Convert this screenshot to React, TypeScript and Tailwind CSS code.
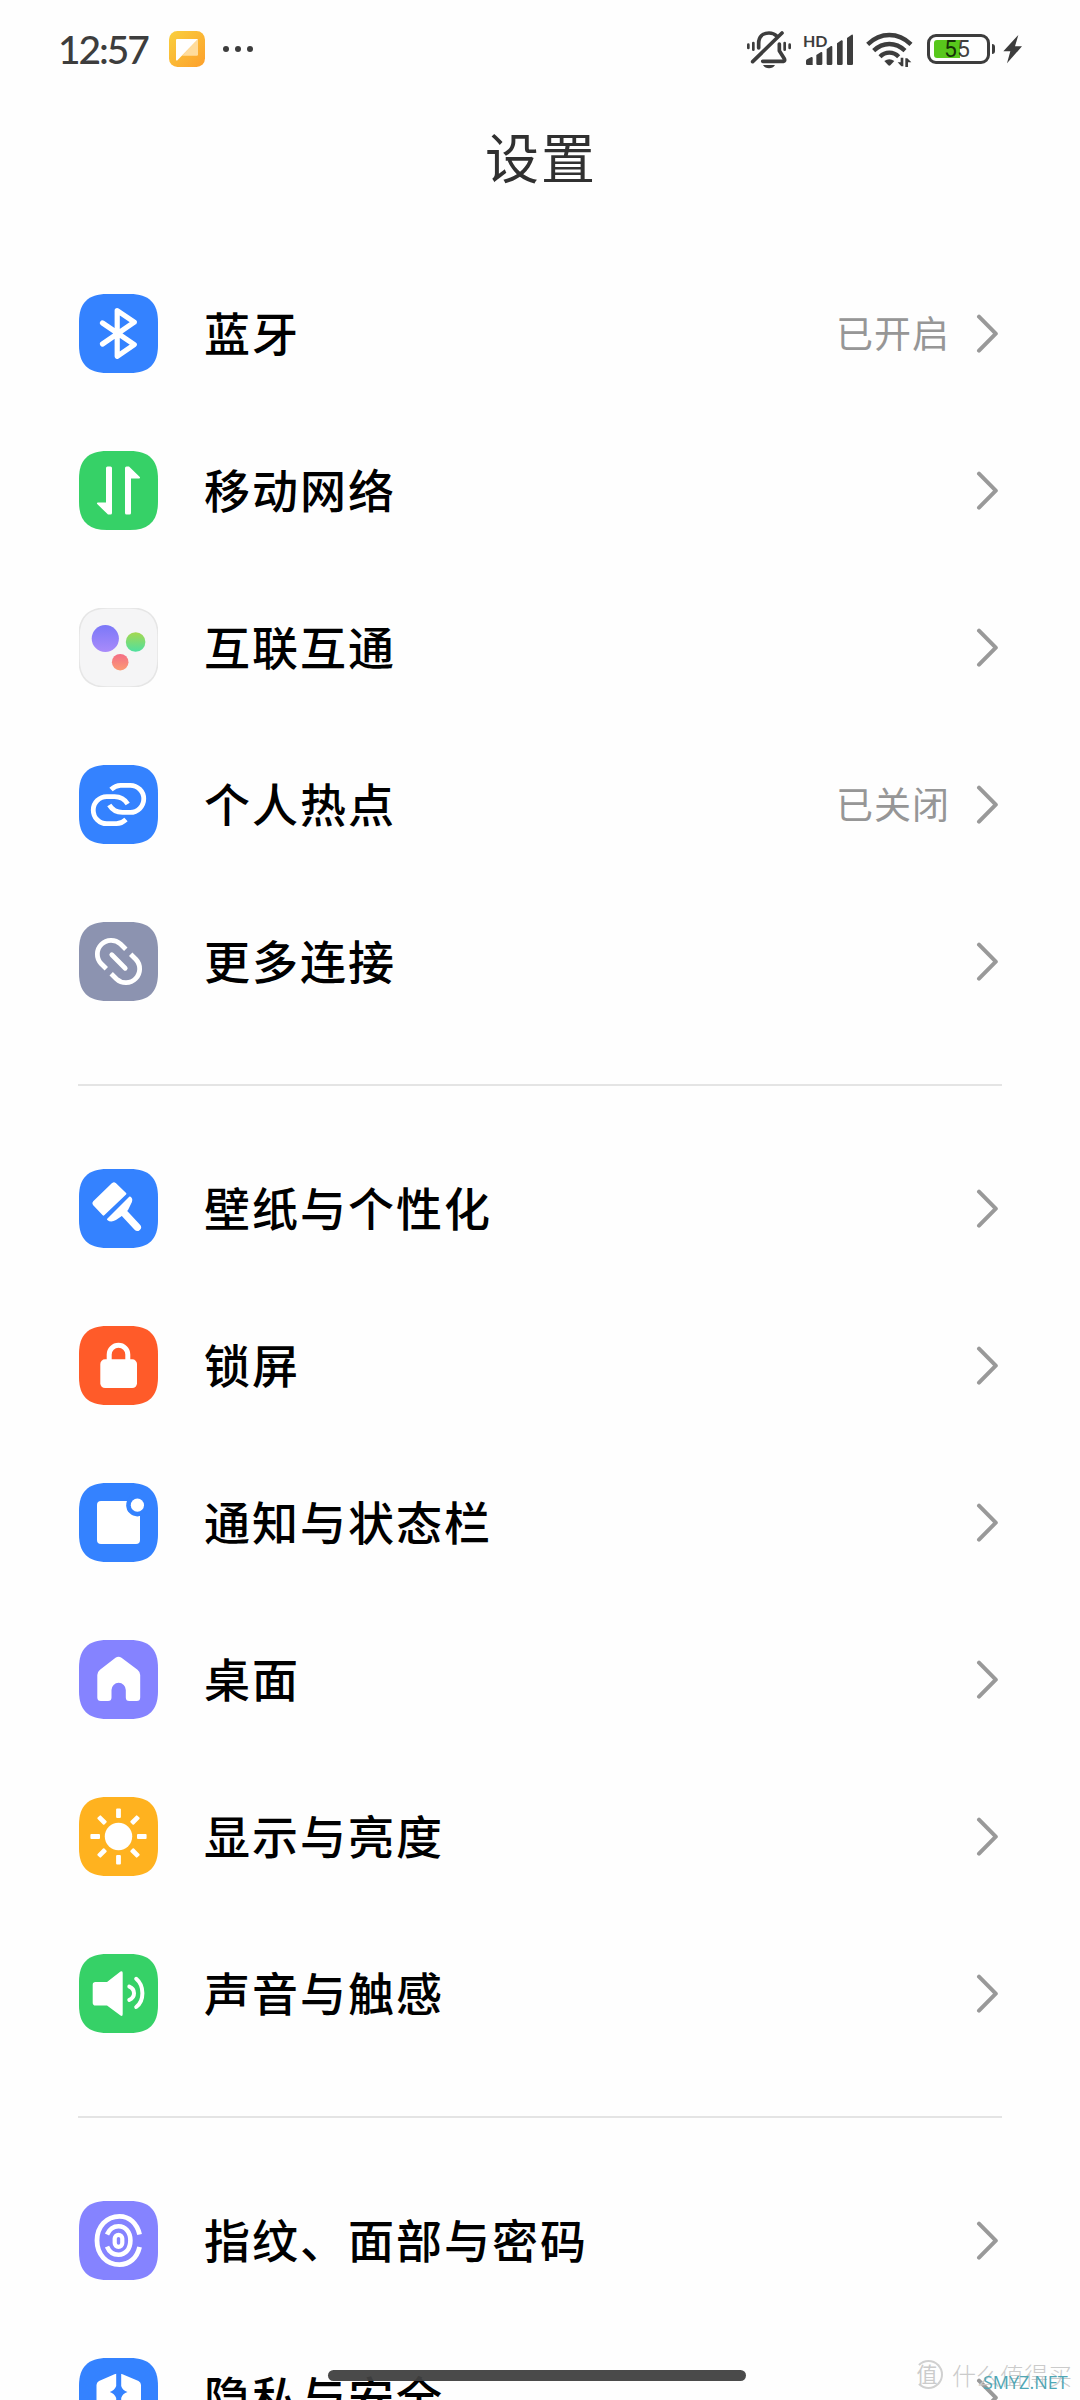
import type { ReactNode } from "react";

const SQUIRCLE =
  "M0 28 C0 9 9 0 28 0 H51 C70 0 79 9 79 28 V51 C79 70 70 79 51 79 H28 C9 79 0 70 0 51 Z";

/** Rounded tile, 79 units wide; glyphs are drawn on top in the same units. */
function Tile({ color, stroke, children }: { color: string; stroke?: string; children: ReactNode }) {
  return (
    <svg className="size-[79px] shrink-0" viewBox="0 0 79 79" fill="none">
      <path d={SQUIRCLE} fill={color} stroke={stroke} strokeWidth={stroke ? 1.5 : 0} />
      {children}
    </svg>
  );
}

const BLUE = "#3482ff";
const GREEN = "#36d167";
const PURPLE = "#8583ff";

const white = { stroke: "#fff", strokeLinecap: "round", strokeLinejoin: "round" } as const;

function BluetoothIcon() {
  return (
    <Tile color={BLUE}>
      <path d="M23.5 29 L55.3 50.6 L38.2 62.3 V16.6 L55.3 28.2 L23.5 50" strokeWidth="5.2" {...white} />
    </Tile>
  );
}

function MobileIcon() {
  const arrow = "M46 17 Q46 15.4 47.5 15.4 H50 L60.8 26 Q61.6 27.5 60 27.5 H52 V62 Q52 63.5 50.5 63.5 H47.5 Q46 63.5 46 62 Z";
  return (
    <Tile color={GREEN}>
      <path d={arrow} fill="#fff" />
      <path d={arrow} fill="#fff" transform="rotate(180 39.5 39.5)" />
    </Tile>
  );
}

function ConnectIcon() {
  return (
    <Tile color="#f5f5f6" stroke="#e6e6e6">
      <defs>
        <linearGradient id="dot-purple" x1="0" y1="0" x2="0" y2="1">
          <stop offset="0" stopColor="#7b78f8" />
          <stop offset="1" stopColor="#a98bfa" />
        </linearGradient>
        <linearGradient id="dot-green" x1="0" y1="0" x2="0" y2="1">
          <stop offset="0" stopColor="#a5d84f" />
          <stop offset="1" stopColor="#4fe0a0" />
        </linearGradient>
        <linearGradient id="dot-red" x1="0" y1="0" x2="0" y2="1">
          <stop offset="0" stopColor="#f46d86" />
          <stop offset="1" stopColor="#fb9c74" />
        </linearGradient>
      </defs>
      <circle cx="26.3" cy="30.5" r="13.6" fill="url(#dot-purple)" />
      <circle cx="56.6" cy="34" r="9.8" fill="url(#dot-green)" />
      <circle cx="41.2" cy="54.2" r="8.3" fill="url(#dot-red)" />
    </Tile>
  );
}

function HotspotIcon() {
  const link = "M32 24.5 Q36.5 20.3 41.5 20.3 H51.2 A13.5 13.5 0 0 1 51.2 47.4 H43.5 C36.5 47.4 33 44.5 30.3 40";
  return (
    <Tile color={BLUE}>
      <path d={link} strokeWidth="4.8" stroke="#fff" />
      <path d={link} strokeWidth="4.8" stroke="#fff" transform="rotate(180 39.5 39.5)" />
    </Tile>
  );
}

function MoreIcon() {
  const half = "M27.3 46.8 L22 41.5 A13.8 13.8 0 0 1 41.5 22 L46.8 27.3";
  return (
    <Tile color="#8c93b0">
      <path d={half} strokeWidth="4.8" stroke="#fff" />
      <path d={half} strokeWidth="4.8" stroke="#fff" transform="rotate(180 39.5 39.5)" />
      <path d="M32.8 32.8 L46.2 46.2" strokeWidth="4.8" {...white} />
    </Tile>
  );
}

function BrushIcon() {
  return (
    <Tile color={BLUE}>
      <path d="M36 14.8 L46.3 24.8 L24.5 45.5 L14.8 35.2 Q14 34 15 33 L33.8 14.8 Q35 14 36 14.8 Z" fill="#fff" strokeWidth="2.2" {...white} />
      <path d="M50.8 28.2 Q53.2 29.5 52.2 32.6 L48.2 40.8 L44.2 45.2 L36.5 50.3 Q32 53 28.8 50.3 Z" fill="#fff" strokeWidth="1.6" {...white} />
      <path d="M46 45 L58.3 58.2" strokeWidth="7.4" {...white} />
    </Tile>
  );
}

function LockIcon() {
  return (
    <Tile color="#ff5b29">
      <rect x="21.3" y="33.3" width="36.7" height="28.8" rx="4.8" fill="#fff" />
      <path d="M30.2 36 V28.6 A9.3 9.3 0 0 1 48.8 28.6 V36" strokeWidth="5" stroke="#fff" />
    </Tile>
  );
}

function NoticeIcon() {
  return (
    <Tile color={BLUE}>
      <rect x="18" y="18" width="43" height="43" rx="4" fill="#fff" />
      <circle cx="58.4" cy="22.2" r="11.2" fill={BLUE} />
      <circle cx="58.4" cy="22.2" r="6.6" fill="#fff" />
    </Tile>
  );
}

function HomeIcon() {
  return (
    <Tile color={PURPLE}>
      <path
        d="M36.5 17.7 Q39.5 15.7 42.5 17.7 L58.5 29.8 Q61.2 32 61.2 35 V57.5 Q61.2 61 57.7 61 H50.3 Q46.8 61 46.8 57.5 V50 A7.1 7.1 0 0 0 32.5 50 V57.5 Q32.5 61 29 61 H21.8 Q18.3 61 18.3 57.5 V35 Q18.3 32 21 29.8 Z"
        fill="#fff"
      />
    </Tile>
  );
}

function SunIcon() {
  return (
    <Tile color="#ffb21f">
      <circle cx="39.5" cy="39.5" r="13.7" fill="#fff" />
      {[0, 45, 90, 135, 180, 225, 270, 315].map((deg) => (
        <rect key={deg} x="37.1" y="11.4" width="4.8" height="9.6" rx="1" fill="#fff" transform={`rotate(${deg} 39.5 39.5)`} />
      ))}
    </Tile>
  );
}

function SoundIcon() {
  return (
    <Tile color={GREEN}>
      <path
        d="M16.5 28 H28 L41.5 17.6 Q43.7 16.2 43.7 19 V60 Q43.7 63 41.5 61.6 L28 51.5 H16.5 Q13.7 51.5 13.7 48.7 V30.8 Q13.7 28 16.5 28 Z"
        fill="#fff"
      />
      <path d="M50.3 32.6 Q55 34.5 55 39.3 Q55 44 50.3 45.9" strokeWidth="4" {...white} />
      <path d="M57.2 24.8 Q63.4 30 63.4 39.3 Q63.4 48.5 57.2 53" strokeWidth="4" {...white} />
    </Tile>
  );
}

function FingerprintIcon() {
  return (
    <Tile color={PURPLE}>
      <path d="M60.6 33.5 C58 22.5 50.5 15.4 40.5 15.4 C27.5 15.4 18 25.5 18 39.5 C18 53.5 27.5 63.6 40.5 63.6 C50.5 63.6 58 57 60.6 46" strokeWidth="4.8" stroke="#fff" />
      <path d="M28 33.5 C30.5 28 34.8 25.3 39.5 25.3 C46.5 25.3 51.4 31 51.4 39.5 C51.4 48 46.5 53.7 39.5 53.7 C34.8 53.7 30.5 51.5 28 45.6" strokeWidth="4.6" stroke="#fff" />
      <rect x="35.7" y="33.8" width="7.6" height="12" rx="3.8" strokeWidth="4.2" stroke="#fff" />
    </Tile>
  );
}

function PrivacyIcon() {
  return (
    <Tile color={BLUE}>
      <path d="M35.5 16.3 Q39.5 14.5 43.5 16.3 L59.5 23 Q62 24.3 62 27 V42 C62 53 51 60 39.5 65 C28 60 17.5 53 17.5 42 V27 Q17.5 24.3 20 23 Z" fill="#fff" />
      <path d="M37.2 14 H42.2 V28 Q43.5 32.5 48.5 34 Q43.5 35.5 42.2 40 V66 H37.2 V40 Q35.5 35.5 30.8 34 Q35.5 32.5 37.2 28 Z" fill={BLUE} />
    </Tile>
  );
}

type Item = { label: string; icon: () => ReactNode; value?: string };

const GROUPS: Item[][] = [
  [
    { label: "蓝牙", icon: BluetoothIcon, value: "已开启" },
    { label: "移动网络", icon: MobileIcon },
    { label: "互联互通", icon: ConnectIcon },
    { label: "个人热点", icon: HotspotIcon, value: "已关闭" },
    { label: "更多连接", icon: MoreIcon },
  ],
  [
    { label: "壁纸与个性化", icon: BrushIcon },
    { label: "锁屏", icon: LockIcon },
    { label: "通知与状态栏", icon: NoticeIcon },
    { label: "桌面", icon: HomeIcon },
    { label: "显示与亮度", icon: SunIcon },
    { label: "声音与触感", icon: SoundIcon },
  ],
  [
    { label: "指纹、面部与密码", icon: FingerprintIcon },
    { label: "隐私与安全", icon: PrivacyIcon },
  ],
];

function StatusBar() {
  return (
    <header className="flex h-[98px] shrink-0 items-center pl-[58px] pr-[58px] text-[#3d3d3d]">
      <span className="w-[111px] font-['Lato'] text-[39px] font-medium leading-none tracking-[-2.1px]">12:57</span>
      <svg className="size-9" viewBox="0 0 36 36">
        <defs>
          <linearGradient id="note" x1="0" y1="0" x2="1" y2="1">
            <stop offset="0" stopColor="#f9d03e" />
            <stop offset="1" stopColor="#fd9f2b" />
          </linearGradient>
        </defs>
        <rect width="36" height="36" rx="8.5" fill="url(#note)" />
        <path d="M29 8 V23.5 Q29 24.8 27.7 24.8 H13 Z" fill="#ffdc9c" />
        <path d="M7 9 Q7 8 8 8 H29 L8.2 29.4 Q7 30 7 28.8 Z" fill="#fff" />
      </svg>
      <div className="ml-[18px] flex gap-1.5">
        <i className="size-1.5 rounded-full bg-[#3d3d3d]" />
        <i className="size-1.5 rounded-full bg-[#3d3d3d]" />
        <i className="size-1.5 rounded-full bg-[#3d3d3d]" />
      </div>

      <div className="ml-auto flex items-center">
        {/* muted bell */}
        <svg className="h-10 w-[46px]" viewBox="48 57 138 120" fill="none" stroke="currentColor" strokeWidth="11" strokeLinecap="round">
          <path d="M86 114 V100 C86 80 99 69 117 69 C127 69 134 72 140 78" />
          <path d="M148 102 V122 L163 146 Q166 153 160 154 H98" strokeLinejoin="round" />
          <path d="M156 69 L68 155" />
          <path d="M99 165 H135 Q129 175 117 175 Q105 175 99 165 Z" fill="currentColor" stroke="none" />
          <path d="M70 99 V119 M55 104 V114 M164 99 V119 M179 104 V114" strokeWidth="8" />
        </svg>
        <div className="relative ml-[11px] h-10 w-[50px]">
          <span className="absolute left-0 top-[4px] font-['Lato'] text-[16px] font-bold leading-[16px]">HD</span>
          <svg className="size-full" viewBox="218 57 150 120" fill="currentColor">
            <path d="M227 153 Q227 150 230 148 L243 141 Q247 140 247 144 V165 H231 Q227 165 227 161 Z" />
            <path d="M258 135 L272 126 Q276 125 276 129 V161 Q276 165 272 165 H262 Q258 165 258 161 Z" />
            <path d="M289 117 L302 108 Q306 107 306 111 V161 Q306 165 302 165 H293 Q289 165 289 161 Z" />
            <path d="M320 100 L333 91 Q337 90 337 94 V161 Q337 165 333 165 H324 Q320 165 320 161 Z" />
            <path d="M350 84 L364 74 Q368 73 368 77 V161 Q368 165 364 165 H354 Q350 165 350 161 Z" />
          </svg>
        </div>
        {/* wifi with traffic arrows */}
        <svg className="ml-[13px] h-10 w-[47px]" viewBox="407 57 141 120" fill="none" stroke="currentColor" strokeWidth="13">
          <path d="M412 103 Q441 75 477 75 Q513 75 542 103" />
          <path d="M430 122 Q451 102 477 102 Q503 102 524 122" />
          <path d="M449 140 Q461 128 477 128 Q493 128 505 140" />
          <path d="M462 153 Q477 142 492 153 L480 166 Q477 168 474 166 Z" fill="currentColor" stroke="none" />
          <path d="M519 143 V169 H513 L502 157 H511 V143 Z M525 171 V145 H531 L543 157 H533 V171 Z" fill="currentColor" stroke="none" />
        </svg>
        <div className="relative ml-[14px] flex h-[30px] w-[63px] items-center rounded-[9px] border-[3px] border-[#3d3d3d] pl-1">
          <div className="h-[18px] w-[26px] rounded-l-[3px] bg-[#58c71c]" />
          <span className="absolute left-[14px] top-[1px] font-['Roboto'] text-[23px] leading-[24px] text-black/75">55</span>
        </div>
        <div className="ml-[2px] h-[10px] w-[3px] rounded-r-sm bg-[#3d3d3d]" />
        <svg className="ml-2 h-10 w-[19px]" viewBox="819 57 57 120" fill="currentColor">
          <path d="M865 75 L820 124 H841 L831 160 L876 109 H855 Z" />
        </svg>
      </div>
    </header>
  );
}

function Row({ label, icon: Icon, value }: Item) {
  return (
    <li className="flex h-[157px] shrink-0 items-center pl-[79px] pr-[82px]">
      <Icon />
      <span className="ml-[46px] pb-[6px] text-[46px] font-medium leading-none tracking-[2px] text-black">{label}</span>
      <span className="ml-auto pb-[3px] text-[37px] leading-none tracking-[1px] text-[#969696]">{value}</span>
      <svg className="ml-[26px] h-[40px] w-[22px]" viewBox="0 0 22 40" fill="none">
        <path d="M3 2.7 L19.8 19.7 L3 36.7" stroke="#999" strokeWidth="4" strokeLinecap="round" strokeLinejoin="round" />
      </svg>
    </li>
  );
}

export default function App() {
  return (
    <div className="relative flex h-[2400px] w-[1080px] flex-col overflow-hidden bg-[#fefefe] font-['Noto_Sans_CJK_SC',sans-serif]">
      <StatusBar />
      <h1 className="flex h-[157px] shrink-0 justify-center pl-[2px] pt-[31px] text-[54px] leading-none tracking-[2px] text-[#303030]">设置</h1>

      {GROUPS.map((items, i) => (
        <section key={i} className="shrink-0">
          {i > 0 && (
            <div className="flex h-[90px] items-center px-[78px]">
              <hr className="h-[2px] w-full border-0 bg-[#e4e4e4]" />
            </div>
          )}
          <ul className="flex flex-col">
            {items.map((item) => (
              <Row key={item.label} {...item} />
            ))}
          </ul>
        </section>
      ))}

      {/* gesture bar */}
      <div className="absolute left-[328px] top-[2370px] h-[11px] w-[418px] rounded-full bg-[#404040]/95" />

      {/* watermarks */}
      <div className="absolute left-[914px] top-[2360px] flex items-center gap-[9px] text-[#cbcbcb]">
        <span className="flex size-[29px] items-center justify-center rounded-full border-2 border-l-transparent border-[#d0d0d0] pb-[2px] pr-[3px] text-[21px] leading-none">值</span>
        <span className="text-[24px] font-light leading-none">什么值得买</span>
      </div>
      <span className="absolute left-[983px] top-[2370px] font-['Open_Sans'] text-[18px] leading-[24px] text-[#4fa6b5]">SMYZ.NET</span>
    </div>
  );
}
